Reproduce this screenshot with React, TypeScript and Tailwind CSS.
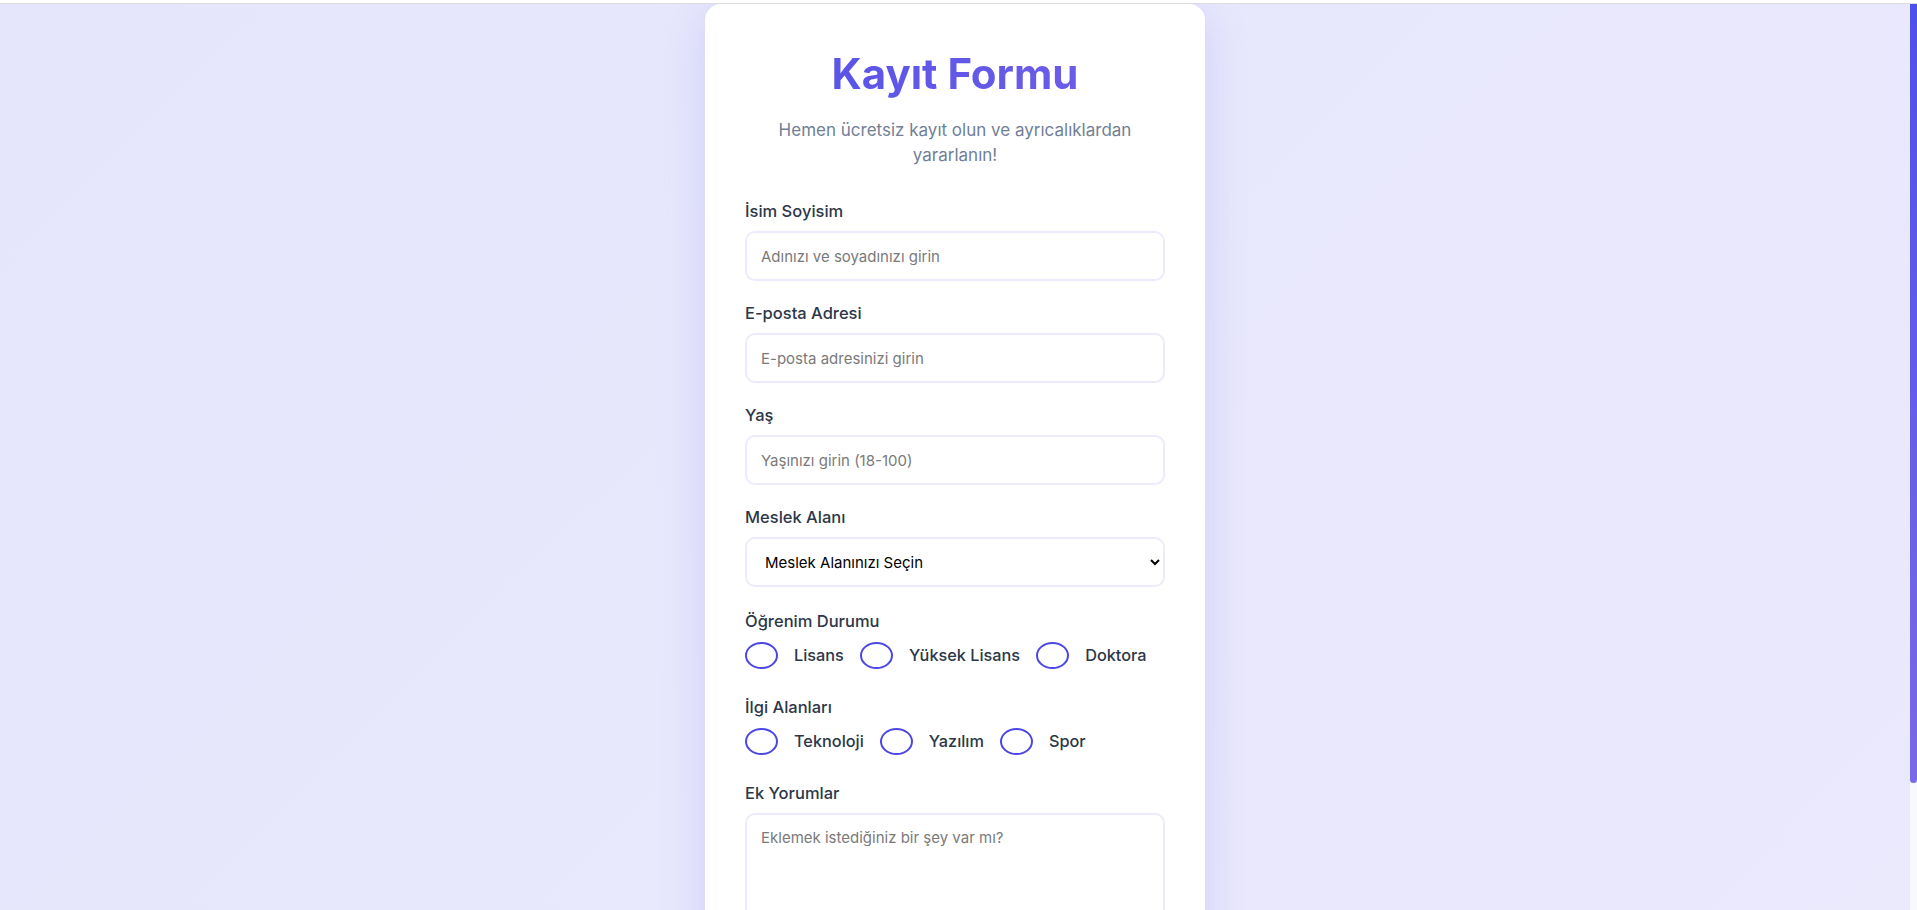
import { useState } from "react";

const egitimSecenekleri = ["Lisans", "Yüksek Lisans", "Doktora"];
const ilgiSecenekleri = ["Teknoloji", "Yazılım", "Spor"];

const inputClass =
  "w-full h-[50px] rounded-[10px] border-2 border-[#ebebfd] bg-white px-[14px] text-[15px] text-[#2d3748] placeholder:text-[#7a7a7a] outline-none focus:border-[#6366f1]";

const Label = ({ children }: { children: React.ReactNode }) => (
  <label className="block mb-2 text-[16.5px] leading-6 font-medium text-[#2d3748]">{children}</label>
);

const SecimSatiri = ({
  secenekler,
  secili,
  onSec,
}: {
  secenekler: string[];
  secili: string;
  onSec: (v: string) => void;
}) => (
  <div className="flex items-center gap-4 mt-[9px]">
    {secenekler.map((s) => (
      <button key={s} type="button" onClick={() => onSec(s)} className="flex items-center gap-4">
        <span className="flex items-center justify-center w-[33px] h-[27px] rounded-[50%] border-2 border-[#4b47e6]">
          {secili === s && <span className="w-[13px] h-[11px] rounded-[50%] bg-[#4b47e6]" />}
        </span>
        <span className="text-[16.3px] font-medium text-[#2d3748]">{s}</span>
      </button>
    ))}
  </div>
);

export default function App() {
  const [egitim, setEgitim] = useState("");
  const [ilgi, setIlgi] = useState("");

  return (
    <div className="h-screen flex flex-col font-['Inter','Noto_Sans',sans-serif]">
      <div className="h-[4px] shrink-0 bg-white border-b border-[#dcdcdc]" />
      <div className="flex-1 min-h-0 flex">
        <div className="flex-1 overflow-y-auto [scrollbar-width:none] bg-[linear-gradient(135deg,#e5e6fc,#ebe9fc)]">
          <form
            onSubmit={(e) => e.preventDefault()}
            className="w-[500px] mx-auto bg-white rounded-2xl px-10 pt-[46px] pb-10 shadow-[0_10px_45px_rgba(99,102,241,0.18)]"
          >
            <h1 className="text-center text-[42px] leading-[48px] font-bold bg-[linear-gradient(90deg,#5552e8,#6f5fe7)] bg-clip-text text-transparent">
              Kayıt Formu
            </h1>
            <p className="mt-[20px] mb-[31px] mx-auto max-w-[390px] text-center text-[17px] leading-[25px] text-[#718096]">
              Hemen ücretsiz kayıt olun ve ayrıcalıklardan yararlanın!
            </p>

            <div className="mb-5">
              <Label>İsim Soyisim</Label>
              <input type="text" className={inputClass} placeholder="Adınızı ve soyadınızı girin" />
            </div>

            <div className="mb-5">
              <Label>E-posta Adresi</Label>
              <input type="email" className={inputClass} placeholder="E-posta adresinizi girin" />
            </div>

            <div className="mb-5">
              <Label>Yaş</Label>
              <input type="number" min={18} max={100} className={inputClass} placeholder="Yaşınızı girin (18-100)" />
            </div>

            <div className="mb-[22px]">
              <Label>Meslek Alanı</Label>
              <select className={inputClass + " text-black"} defaultValue="">
                <option value="">Meslek Alanınızı Seçin</option>
                <option value="yazilim">Yazılım</option>
                <option value="egitim">Eğitim</option>
                <option value="saglik">Sağlık</option>
                <option value="diger">Diğer</option>
              </select>
            </div>

            <div className="mb-[26px]">
              <span className="block text-[16.5px] leading-6 font-medium text-[#2d3748]">Öğrenim Durumu</span>
              <SecimSatiri secenekler={egitimSecenekleri} secili={egitim} onSec={setEgitim} />
            </div>

            <div className="mb-[26px]">
              <span className="block text-[16.5px] leading-6 font-medium text-[#2d3748]">İlgi Alanları</span>
              <SecimSatiri secenekler={ilgiSecenekleri} secili={ilgi} onSec={setIlgi} />
            </div>

            <div className="mb-5">
              <Label>Ek Yorumlar</Label>
              <textarea
                className={inputClass + " h-[120px] py-3 resize-y"}
                placeholder="Eklemek istediğiniz bir şey var mı?"
              />
            </div>

            <button
              type="submit"
              className="w-full h-[50px] rounded-[10px] bg-[linear-gradient(90deg,#5552e8,#7a69e6)] text-white text-[16px] font-semibold"
            >
              Kaydol
            </button>
          </form>
        </div>
        {/* kaydırma çubuğu */}
        <div className="w-[7px] shrink-0 bg-[#f8f8ff]">
          <div className="h-[779px] rounded-b-full rounded-t-[3px] bg-[linear-gradient(to_bottom,#4f50e9,#7a69e6)]" />
        </div>
      </div>
    </div>
  );
}
